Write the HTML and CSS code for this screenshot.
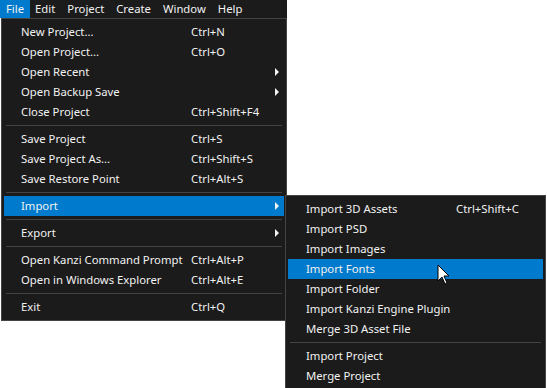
FILE: index.html
```html
<!DOCTYPE html>
<html lang="en">
  <head>
    <meta charset="UTF-8" />
    <title>File menu</title>
    <link rel="stylesheet" href="styles.css">
  </head>
  <body>
    <div class="menubar">
      <span class="top-item active">File</span>
      <span class="top-item">Edit</span>
      <span class="top-item">Project</span>
      <span class="top-item">Create</span>
      <span class="top-item">Window</span>
      <span class="top-item">Help</span>
    </div>

    <div class="menu main-menu">
      <div class="item"><span class="label">New Project...</span><span class="key">Ctrl+N</span></div>
      <div class="item"><span class="label">Open Project...</span><span class="key">Ctrl+O</span></div>
      <div class="item sub"><span class="label">Open Recent</span><span class="key"></span></div>
      <div class="item sub"><span class="label">Open Backup Save</span><span class="key"></span></div>
      <div class="item"><span class="label">Close Project</span><span class="key">Ctrl+Shift+F4</span></div>
      <div class="sep"></div>
      <div class="item"><span class="label">Save Project</span><span class="key">Ctrl+S</span></div>
      <div class="item"><span class="label">Save Project As...</span><span class="key">Ctrl+Shift+S</span></div>
      <div class="item"><span class="label">Save Restore Point</span><span class="key">Ctrl+Alt+S</span></div>
      <div class="sep"></div>
      <div class="item sub selected"><span class="label">Import</span><span class="key"></span></div>
      <div class="sep"></div>
      <div class="item sub"><span class="label">Export</span><span class="key"></span></div>
      <div class="sep"></div>
      <div class="item"><span class="label">Open Kanzi Command Prompt</span><span class="key">Ctrl+Alt+P</span></div>
      <div class="item"><span class="label">Open in Windows Explorer</span><span class="key">Ctrl+Alt+E</span></div>
      <div class="sep"></div>
      <div class="item"><span class="label">Exit</span><span class="key">Ctrl+Q</span></div>
    </div>

    <div class="menu sub-menu">
      <div class="item"><span class="label">Import 3D Assets</span><span class="key">Ctrl+Shift+C</span></div>
      <div class="item"><span class="label">Import PSD</span><span class="key"></span></div>
      <div class="item"><span class="label">Import Images</span><span class="key"></span></div>
      <div class="item selected"><span class="label">Import Fonts</span><span class="key"></span></div>
      <div class="item"><span class="label">Import Folder</span><span class="key"></span></div>
      <div class="item"><span class="label">Import Kanzi Engine Plugin</span><span class="key"></span></div>
      <div class="item"><span class="label">Merge 3D Asset File</span><span class="key"></span></div>
      <div class="sep"></div>
      <div class="item"><span class="label">Import Project</span><span class="key"></span></div>
      <div class="item"><span class="label">Merge Project</span><span class="key"></span></div>
    </div>

    <svg class="cursor" width="14" height="22" viewBox="0 0 14 22">
      <path d="M1 1 L1 17 L5 13 L8 20 L10 19 L7 12 L12 12 Z" fill="#fff" stroke="#000" stroke-width="1" stroke-linejoin="miter"/>
    </svg>
  </body>
</html>
```

FILE: styles.css
```css
* {
  box-sizing: border-box;
}
body {
  margin: 0;
  background: #fff;
  font-family: 'Noto Sans', 'Open Sans', sans-serif;
  font-size: 11.3px;
  color: #f2f2f2;
  position: relative;
  width: 547px;
  height: 388px;
  overflow: hidden;
}
.menubar {
  width: 287px;
  height: 18px;
  background: #1b1b1b;
  display: flex;
  font-size: 11.3px;
}
.top-item {
  padding: 0 5px;
  line-height: 17px;
  margin-right: 2px;
}
.top-item.active {
  background: #007acc;
  line-height: 18px;
  padding: 0 6px 1px;
  margin-right: 0;
  height: 18px;
}
.menu {
  background: #1b1b1b;
  border: 1px solid #444;
  padding: 3px 0;
  white-space: nowrap;
}
.main-menu {
  width: 286px;
  margin-left: 1px;
}
.sub-menu {
  position: absolute;
  left: 285px;
  top: 195px;
  width: 261px;
}
.item {
  height: 20px;
  display: flex;
  align-items: center;
  margin: 0 2px;
  padding-bottom: 2px;
  position: relative;
}
.item.selected {
  background: #007acc;
}
.main-menu .label {
  flex: 0 0 187px;
  padding-left: 17px;
}
.sub-menu .label {
  flex: 0 0 168px;
  padding-left: 18px;
}
.sub.item::after {
  content: '';
  position: absolute;
  left: 271px;
  top: 6px;
  border-left: 4px solid #f2f2f2;
  border-top: 4px solid transparent;
  border-bottom: 4px solid transparent;
}
.sep {
  height: 7px;
  padding-top: 3px;
  margin: 0 4px;
}
.sep::before {
  content: '';
  display: block;
  height: 1px;
  background: #444;
}
.cursor {
  position: absolute;
  left: 437px;
  top: 264px;
}
```
